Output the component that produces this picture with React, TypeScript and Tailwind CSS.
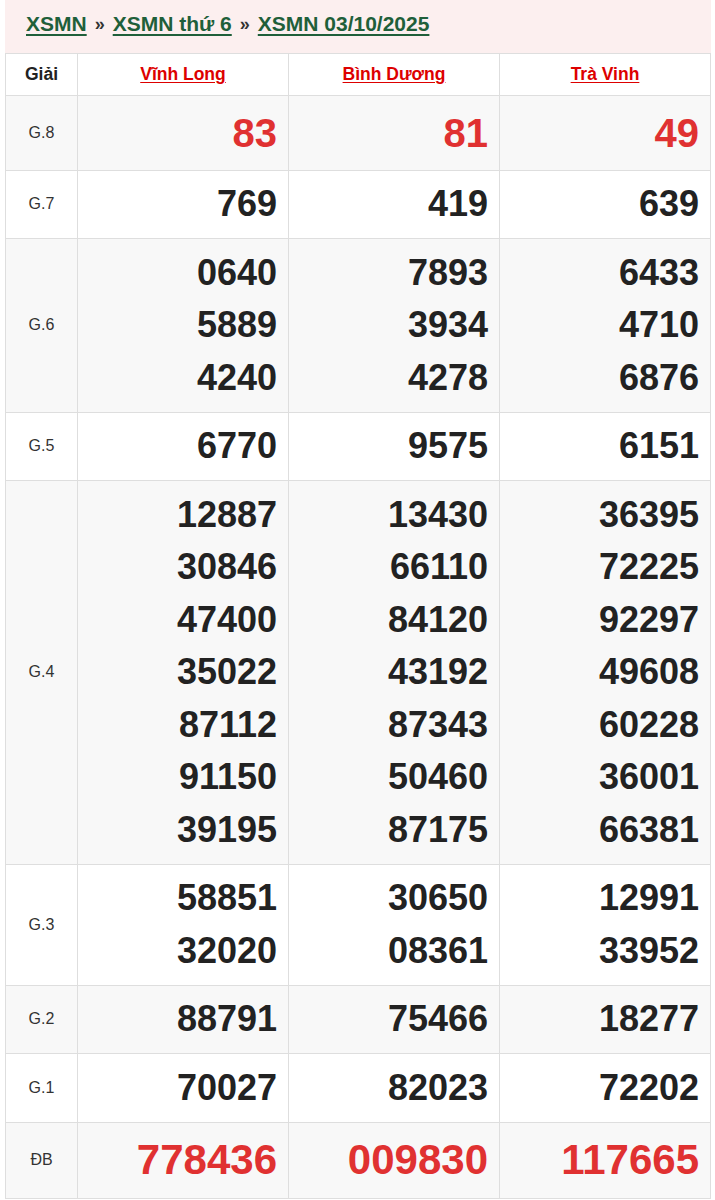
import React from "react";

type Row = {
  label: string;
  values: string[][];
  kind?: "g8" | "db";
};

const PROVINCES = ["Vĩnh Long", "Bình Dương", "Trà Vinh"];

const ROWS: Row[] = [
  { label: "G.8", values: [["83"], ["81"], ["49"]], kind: "g8" },
  { label: "G.7", values: [["769"], ["419"], ["639"]] },
  {
    label: "G.6",
    values: [
      ["0640", "5889", "4240"],
      ["7893", "3934", "4278"],
      ["6433", "4710", "6876"],
    ],
  },
  { label: "G.5", values: [["6770"], ["9575"], ["6151"]] },
  {
    label: "G.4",
    values: [
      ["12887", "30846", "47400", "35022", "87112", "91150", "39195"],
      ["13430", "66110", "84120", "43192", "87343", "50460", "87175"],
      ["36395", "72225", "92297", "49608", "60228", "36001", "66381"],
    ],
  },
  {
    label: "G.3",
    values: [
      ["58851", "32020"],
      ["30650", "08361"],
      ["12991", "33952"],
    ],
  },
  { label: "G.2", values: [["88791"], ["75466"], ["18277"]] },
  { label: "G.1", values: [["70027"], ["82023"], ["72202"]] },
  { label: "ĐB", values: [["778436"], ["009830"], ["117665"]], kind: "db" },
];

function numClass(kind?: Row["kind"]) {
  if (kind === "g8") return "text-[40px] leading-[58.5px] text-[#e03131]";
  if (kind === "db") return "text-[42px] leading-[60px] text-[#e03131]";
  return "text-[36px] leading-[52.5px] text-[#222]";
}

export default function App() {
  return (
    <div className="w-[715px] bg-white font-['Liberation_Sans',Arial,sans-serif]">
      <div className="ml-[5px] w-[706px]">
        {/* Breadcrumb */}
        <div className="bg-[#fcefef] h-[53px] pl-[21px] pb-[5px] flex items-center text-[21px] font-bold">
          <a className="text-[#1f5f3a] underline underline-offset-[3px] decoration-2">XSMN</a>
          <span className="mx-[8px] text-[#333] text-[18px]">»</span>
          <a className="text-[#1f5f3a] underline underline-offset-[3px] decoration-2">XSMN thứ 6</a>
          <span className="mx-[8px] text-[#333] text-[18px]">»</span>
          <a className="text-[#1f5f3a] underline underline-offset-[3px] decoration-2">XSMN 03/10/2025</a>
        </div>

        {/* Results */}
        <table className="w-full table-fixed border-collapse border border-[#dedede]">
          <colgroup>
            <col className="w-[72px]" />
            <col />
            <col />
            <col />
          </colgroup>
          <thead>
            <tr className="bg-white">
              <th className="border border-[#dedede] py-2 text-[17.5px] leading-[25px] font-bold text-[#222]">Giải</th>
              {PROVINCES.map((p) => (
                <th key={p} className="border border-[#dedede] py-2 text-[17.5px] leading-[25px] font-bold">
                  <a className="text-[#d00] underline underline-offset-2">{p}</a>
                </th>
              ))}
            </tr>
          </thead>
          <tbody>
            {ROWS.map((row, i) => (
              <tr key={row.label} className={i % 2 === 0 ? "bg-[#f8f8f8]" : "bg-white"}>
                <td className="border border-[#dedede] text-center text-[16px] text-[#333]">{row.label}</td>
                {row.values.map((col, j) => (
                  <td key={j} className="border border-[#dedede] py-[7.5px] pr-[11px] text-right font-bold">
                    {col.map((n, k) => (
                      <div key={k} className={numClass(row.kind)}>
                        {n}
                      </div>
                    ))}
                  </td>
                ))}
              </tr>
            ))}
          </tbody>
        </table>
      </div>
    </div>
  );
}
